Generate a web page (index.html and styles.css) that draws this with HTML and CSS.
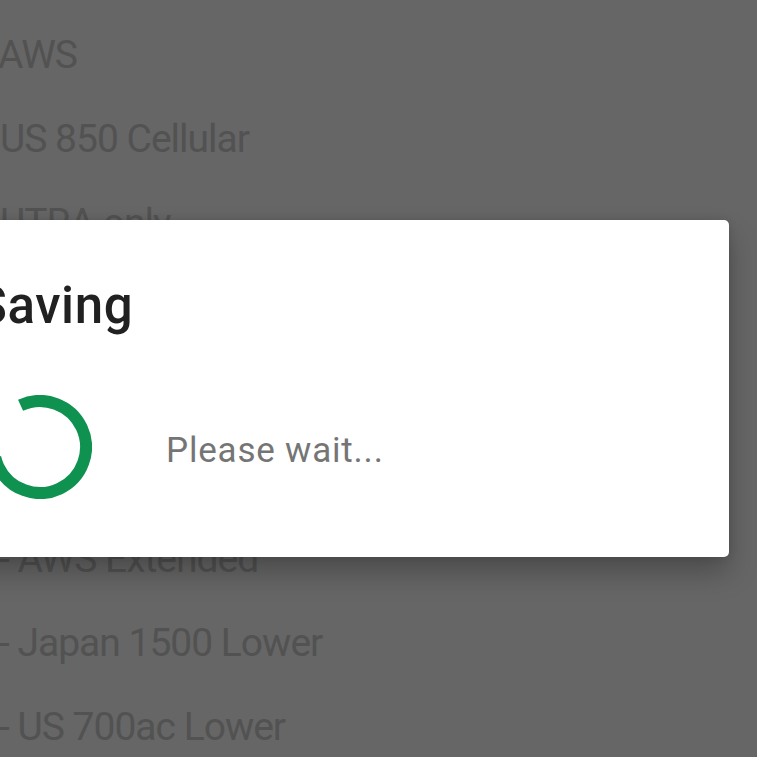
FILE: index.html
```html
<!DOCTYPE html>
<html>
<head>
<meta charset="utf-8">
<link rel="stylesheet" href="styles.css">
</head>
<body>
<ul class="bands">
  <li class="band band-top">AWS</li>
  <li class="band">US 850 Cellular</li>
  <li class="band">UTRA only</li>
  <li class="band">- GSM 900</li>
  <li class="band">- GSM 1800</li>
  <li class="band">- PCS 1900</li>
  <li class="band band-sub">- AWS Extended</li>
  <li class="band band-sub">- Japan 1500 Lower</li>
  <li class="band band-sub">- US 700ac Lower</li>
</ul>
<div class="dialog">
  <h1 class="dialog-title">Saving</h1>
  <div class="dialog-body">
    <svg class="spinner" width="104" height="104" viewBox="0 0 104 104">
      <circle cx="52" cy="52" r="46" fill="none" stroke="#0f9150" stroke-width="12"
        stroke-dasharray="226 63" transform="rotate(-115 52 52)"/>
    </svg>
    <span class="dialog-msg">Please wait...</span>
  </div>
</div>
</body>
</html>
```
FILE: styles.css
```css
html, body {
  margin: 0;
  padding: 0;
}
body {
  width: 757px;
  height: 757px;
  overflow: hidden;
  background: #666666;
  font-family: Roboto, "Liberation Sans", sans-serif;
  position: relative;
}
.bands {
  list-style: none;
  margin: 0;
  padding: 13px 0 0 0;
}
.band {
  height: 84px;
  line-height: 84px;
  font-size: 39px;
  letter-spacing: -1px;
  color: #525252;
  white-space: nowrap;
  margin-left: 0;
}
.band-top {
  margin-left: -2px;
}
.band-sub {
  margin-left: -1px;
}
.dialog {
  position: absolute;
  left: -100px;
  top: 220px;
  width: 829px;
  height: 337px;
  box-sizing: border-box;
  background: #ffffff;
  border-radius: 5px;
  padding: 56px 0 0 76px;
  box-shadow: 0 16px 28px rgba(0, 0, 0, 0.25), 0 0 8px rgba(0, 0, 0, 0.12);
}
.dialog-title {
  margin: 0;
  font-size: 51px;
  line-height: 60px;
  font-weight: 500;
  letter-spacing: 0.6px;
  color: #212121;
}
.dialog-body {
  display: flex;
  align-items: center;
  margin-top: 59px;
  margin-left: 12px;
}
.spinner {
  display: block;
  flex: none;
}
.dialog-msg {
  margin-left: 74px;
  margin-top: 6px;
  font-size: 35px;
  letter-spacing: 0.8px;
  color: #757575;
}
```
